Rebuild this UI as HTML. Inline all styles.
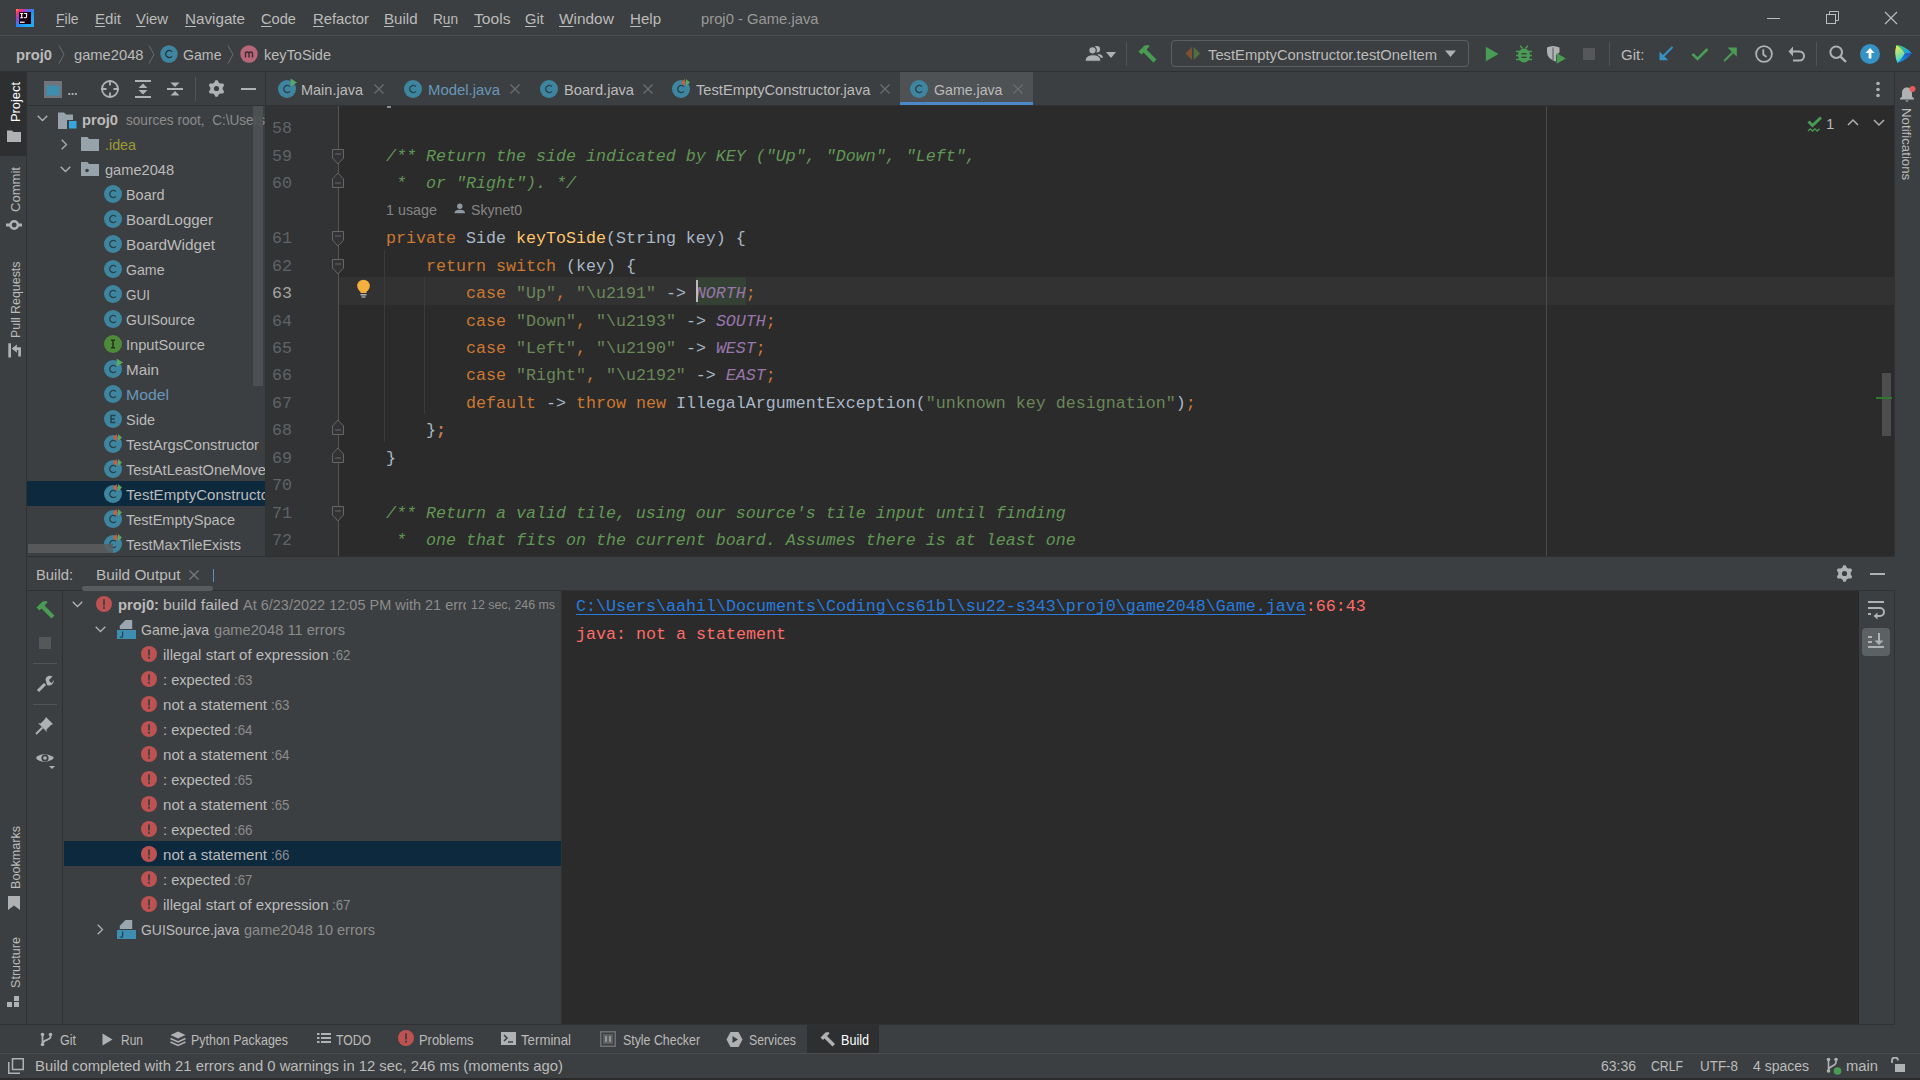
<!DOCTYPE html><html><head><meta charset="utf-8"><style>*{margin:0;padding:0;box-sizing:border-box}
html,body{width:1920px;height:1080px;overflow:hidden;background:#3C3F41;font-family:"Liberation Sans",sans-serif}
body>div,body>svg{position:absolute}
.t{white-space:pre;line-height:1}
.u{text-decoration:underline;text-underline-offset:2px;text-decoration-thickness:1px}
</style></head><body><div style="left:0px;top:0px;width:1920px;height:35px;background:#3C3F41;"></div>
<div style="left:0px;top:35px;width:1920px;height:1px;background:#4B4D4F;"></div>
<svg style="left:16px;top:9px;" width="18" height="18" viewBox="0 0 18 18"><defs><linearGradient id="lg" x1="0" y1="0" x2="0.75" y2="0.75"><stop offset="0" stop-color="#FF9A3C"/><stop offset="0.18" stop-color="#FE2E6D"/><stop offset="0.42" stop-color="#8D4BD6"/><stop offset="0.7" stop-color="#1E8EF5"/><stop offset="1" stop-color="#23A8F2"/></linearGradient></defs><rect width="18" height="18" fill="url(#lg)"/><rect x="3" y="3" width="12" height="12" fill="#1A0010"/><path d="M4.2 4.5H7.2M5.7 4.5V8.7M4.2 8.7H7.2M8.2 4.5H10.6V7.6C10.6 9 8.6 9 8.2 8.2" fill="none" stroke="#fff" stroke-width="1.1"/><rect x="4" y="12.6" width="4.6" height="1.2" fill="#fff"/></svg>
<div class="t" style="left:56px;top:11.30px;font-size:15px;color:#BBBBBB;font-family:'Liberation Sans', sans-serif;;transform:scaleX(0.9309);transform-origin:0 0"><span class="u">F</span>ile</div>
<div class="t" style="left:95px;top:11.30px;font-size:15px;color:#BBBBBB;font-family:'Liberation Sans', sans-serif;;transform:scaleX(1.0059);transform-origin:0 0"><span class="u">E</span>dit</div>
<div class="t" style="left:136px;top:11.30px;font-size:15px;color:#BBBBBB;font-family:'Liberation Sans', sans-serif;;transform:scaleX(0.9925);transform-origin:0 0"><span class="u">V</span>iew</div>
<div class="t" style="left:185px;top:11.30px;font-size:15px;color:#BBBBBB;font-family:'Liberation Sans', sans-serif;;transform:scaleX(1.0135);transform-origin:0 0"><span class="u">N</span>avigate</div>
<div class="t" style="left:261px;top:11.30px;font-size:15px;color:#BBBBBB;font-family:'Liberation Sans', sans-serif;;transform:scaleX(0.9760);transform-origin:0 0"><span class="u">C</span>ode</div>
<div class="t" style="left:312.5px;top:11.30px;font-size:15px;color:#BBBBBB;font-family:'Liberation Sans', sans-serif;;transform:scaleX(0.9878);transform-origin:0 0"><span class="u">R</span>efactor</div>
<div class="t" style="left:384px;top:11.30px;font-size:15px;color:#BBBBBB;font-family:'Liberation Sans', sans-serif;;transform:scaleX(1.0044);transform-origin:0 0"><span class="u">B</span>uild</div>
<div class="t" style="left:433px;top:11.30px;font-size:15px;color:#BBBBBB;font-family:'Liberation Sans', sans-serif;;transform:scaleX(0.9085);transform-origin:0 0">R<span class="u">u</span>n</div>
<div class="t" style="left:473.5px;top:11.30px;font-size:15px;color:#BBBBBB;font-family:'Liberation Sans', sans-serif;;transform:scaleX(1.0423);transform-origin:0 0"><span class="u">T</span>ools</div>
<div class="t" style="left:525px;top:11.30px;font-size:15px;color:#BBBBBB;font-family:'Liberation Sans', sans-serif;;transform:scaleX(0.9782);transform-origin:0 0"><span class="u">G</span>it</div>
<div class="t" style="left:559px;top:11.30px;font-size:15px;color:#BBBBBB;font-family:'Liberation Sans', sans-serif;;transform:scaleX(1.0262);transform-origin:0 0"><span class="u">W</span>indow</div>
<div class="t" style="left:630px;top:11.30px;font-size:15px;color:#BBBBBB;font-family:'Liberation Sans', sans-serif;;transform:scaleX(1.0049);transform-origin:0 0"><span class="u">H</span>elp</div>
<div class="t" style="left:701px;top:11.30px;font-size:15px;color:#999999;font-family:'Liberation Sans', sans-serif;;transform:scaleX(0.9856);transform-origin:0 0">proj0 - Game.java</div>
<div style="left:1767px;top:18px;width:13px;height:1px;background:#BBBBBB;"></div>
<svg style="left:1826px;top:11px;" width="14" height="14" viewBox="0 0 14 14"><rect x="0.5" y="3.5" width="9" height="9" fill="none" stroke="#BBB"/><path d="M3.5 3.5V0.5H12.5V9.5H9.5" fill="none" stroke="#BBB"/></svg>
<svg style="left:1884px;top:11px;" width="14" height="14" viewBox="0 0 14 14"><path d="M1 1L13 13M13 1L1 13" stroke="#BBB" stroke-width="1.2"/></svg>
<div style="left:0px;top:36px;width:1920px;height:35px;background:#3C3F41;"></div>
<div style="left:0px;top:71px;width:1920px;height:1px;background:#2E3032;"></div>
<div class="t" style="left:16px;top:47.30px;font-size:15px;color:#BBBBBB;font-family:'Liberation Sans', sans-serif;;font-weight:bold;transform:scaleX(0.9817);transform-origin:0 0">proj0</div>
<svg style="left:58px;top:45px;" width="7" height="19" viewBox="0 0 7 19"><path d="M1 0.5L6 9.5L1 18.5" fill="none" stroke="#6A6C6E" stroke-width="1"/></svg>
<div class="t" style="left:73.5px;top:47.30px;font-size:15px;color:#BBBBBB;font-family:'Liberation Sans', sans-serif;;transform:scaleX(0.9804);transform-origin:0 0">game2048</div>
<svg style="left:148px;top:45px;" width="7" height="19" viewBox="0 0 7 19"><path d="M1 0.5L6 9.5L1 18.5" fill="none" stroke="#6A6C6E" stroke-width="1"/></svg>
<svg style="left:159.5px;top:44.5px" width="18" height="18" viewBox="0 0 18 18"><circle cx="9" cy="9" r="8.7" fill="#3E86A0"/><path d="M12 6.6A3.6 3.6 0 1 0 12 11.4" fill="none" stroke="#24343B" stroke-width="1.3"/></svg>
<div class="t" style="left:183px;top:47.30px;font-size:15px;color:#BBBBBB;font-family:'Liberation Sans', sans-serif;;transform:scaleX(0.9425);transform-origin:0 0">Game</div>
<svg style="left:227px;top:45px;" width="7" height="19" viewBox="0 0 7 19"><path d="M1 0.5L6 9.5L1 18.5" fill="none" stroke="#6A6C6E" stroke-width="1"/></svg>
<svg style="left:240px;top:44.5px" width="18" height="18" viewBox="0 0 18 18"><circle cx="9" cy="9" r="8.7" fill="#B8677A"/><path d="M5.5 12.5V7M5.5 8.5C5.5 6.5 9 6.5 9 8.5V12.5M9 8.5C9 6.5 12.5 6.5 12.5 8.5V12.5" fill="none" stroke="#3B2A2E" stroke-width="1.4"/></svg>
<div class="t" style="left:263.5px;top:47.30px;font-size:15px;color:#BBBBBB;font-family:'Liberation Sans', sans-serif;;transform:scaleX(0.9681);transform-origin:0 0">keyToSide</div>
<svg style="left:1085px;top:45px;" width="20" height="17" viewBox="0 0 20 17"><circle cx="11.8" cy="4.2" r="3.3" fill="#AFB1B3"/><path d="M12.5 9C16 9 18 10.5 18 12.8H13.5Z" fill="#AFB1B3"/><circle cx="7.5" cy="5.3" r="3.8" fill="#AFB1B3" stroke="#3C3F41" stroke-width="1.3"/><path d="M0 16.2C0 12 3 9.8 8 9.8S16 12 16 16.2Z" fill="#AFB1B3" stroke="#3C3F41" stroke-width="1.1"/></svg>
<svg style="left:1106px;top:52px;" width="10" height="6" viewBox="0 0 10 6"><path d="M0 0H10L5 6Z" fill="#AFB1B3"/></svg>
<div style="left:1126px;top:42px;width:1px;height:24px;background:#515355;"></div>
<svg style="left:1137px;top:44px;" width="21" height="20" viewBox="0 0 21 20"><path d="M1.5 7.5L7.5 1.5L11.5 1L12.5 2.5L9.5 5.5L19.5 15.5L16.5 18.5L6.5 8.5L4.5 10.5Z" fill="#499C54"/></svg>
<div style="left:1171px;top:40px;width:298px;height:27px;background:transparent;border:1px solid #5E6060;border-radius:4px"></div>
<svg style="left:1185px;top:47px;" width="16" height="14" viewBox="0 0 16 14"><path d="M7 0V13L0.5 6.5Z" fill="#7F4F36"/><path d="M8.7 0V13L15.2 6.5Z" fill="#4D6F41"/></svg>
<div class="t" style="left:1208px;top:46.80px;font-size:15px;color:#BBBBBB;font-family:'Liberation Sans', sans-serif;;transform:scaleX(0.9846);transform-origin:0 0">TestEmptyConstructor.testOneItem</div>
<svg style="left:1445px;top:50px;" width="12" height="8" viewBox="0 0 12 8"><path d="M0 0.5H11L5.5 7Z" fill="#AFB1B3"/></svg>
<svg style="left:1485px;top:46px;" width="14" height="16" viewBox="0 0 14 16"><path d="M0.8 0.8V15.2L13.5 8Z" fill="#499C54"/></svg>
<svg style="left:1515px;top:45px;" width="18" height="18" viewBox="0 0 18 18"><path d="M5.2 0.8L7.5 3.5M12.8 0.8L10.5 3.5" stroke="#499C54" stroke-width="1.6"/><ellipse cx="9" cy="10.5" rx="6" ry="7" fill="#499C54"/><path d="M1 6.5H17M1 10.5H17M1 14.5H17" stroke="#499C54" stroke-width="1.6"/><rect x="6.5" y="8" width="5" height="1.4" fill="#3C3F41"/><rect x="6.5" y="11.6" width="5" height="1.4" fill="#3C3F41"/></svg>
<svg style="left:1546px;top:45px;" width="21" height="19" viewBox="0 0 21 19"><path d="M7 1C9.5 1 11 1.8 13.5 2.4V7.5L10 10V16.5C5.5 15 1 12.5 1 6.5V2.4C3 1.8 4.5 1 7 1Z" fill="#AFB1B3"/><path d="M7 2.5V15" stroke="#3C3F41" stroke-width="0.8"/><path d="M10.7 8V18.8L19.8 13.4Z" fill="#499C54"/></svg>
<div style="left:1583px;top:48px;width:12px;height:12px;background:#555759;"></div>
<div style="left:1609px;top:42px;width:1px;height:24px;background:#515355;"></div>
<div class="t" style="left:1621px;top:47.30px;font-size:15px;color:#BBBBBB;font-family:'Liberation Sans', sans-serif;">Git:</div>
<svg style="left:1659px;top:46px;" width="15" height="15" viewBox="0 0 15 15"><path d="M13.5 1L4 10.5" stroke="#3592C4" stroke-width="2"/><path d="M0.5 5.5V14.3H9.3Z" fill="#3592C4"/></svg>
<svg style="left:1691px;top:46px;" width="18" height="15" viewBox="0 0 18 15"><path d="M1.5 8L6.5 13L16.5 3" fill="none" stroke="#499C54" stroke-width="2.6"/></svg>
<svg style="left:1723px;top:47px;" width="15" height="15" viewBox="0 0 15 15"><path d="M1.2 14L10.5 4.7" stroke="#499C54" stroke-width="2"/><path d="M4.5 0.5H13.8V9.8Z" fill="#499C54"/></svg>
<svg style="left:1755px;top:45px;" width="18" height="18" viewBox="0 0 18 18"><circle cx="9" cy="9" r="7.9" fill="none" stroke="#AFB1B3" stroke-width="1.8"/><path d="M8.3 4.3V9.5L11.6 12" fill="none" stroke="#AFB1B3" stroke-width="1.8"/></svg>
<svg style="left:1788px;top:45px;" width="18" height="17" viewBox="0 0 18 17"><path d="M4 6.5H11.5A4.5 4.5 0 0 1 11.5 15.5H5" fill="none" stroke="#AFB1B3" stroke-width="2"/><path d="M0.5 6.5L5 1.5V11.5Z" fill="#AFB1B3"/></svg>
<div style="left:1816px;top:42px;width:1px;height:24px;background:#515355;"></div>
<svg style="left:1829px;top:45px;" width="19" height="19" viewBox="0 0 19 19"><circle cx="7.2" cy="7.2" r="5.8" fill="none" stroke="#AFB1B3" stroke-width="2"/><path d="M11.3 11.3L17 17" stroke="#AFB1B3" stroke-width="2.4"/></svg>
<svg style="left:1859px;top:43px;" width="22" height="22" viewBox="0 0 22 22"><circle cx="11" cy="11" r="10" fill="#3592C4"/><path d="M11 5L6.5 10H9.6V15.5H12.4V10H15.5Z" fill="#fff"/></svg>
<svg style="left:1893px;top:45px;" width="20" height="19" viewBox="0 0 20 19"><defs><linearGradient id="tb1" x1="0" y1="0" x2="0.3" y2="1"><stop offset="0" stop-color="#F5F244"/><stop offset="0.55" stop-color="#97DE8E"/><stop offset="1" stop-color="#26D4E6"/></linearGradient><linearGradient id="tb2" x1="0" y1="0" x2="1" y2="0.6"><stop offset="0" stop-color="#3BDB6E"/><stop offset="1" stop-color="#1C9BEB"/></linearGradient><linearGradient id="tb3" x1="1" y1="0" x2="0" y2="1"><stop offset="0" stop-color="#2150C0"/><stop offset="1" stop-color="#12A0EE"/></linearGradient></defs><path d="M3.5 0Q10 4 12 8.5Q9 14 4.5 18Q0.5 9 3.5 0Z" fill="url(#tb1)"/><path d="M3.5 0Q12 0.5 19 8.5H12Q10 4 3.5 0Z" fill="url(#tb2)"/><path d="M12 8.5H19Q13 15.5 4.5 18Q9 14 12 8.5Z" fill="url(#tb3)"/></svg>
<div style="left:0px;top:72px;width:26px;height:952px;background:#3C3F41;"></div>
<div style="left:26px;top:72px;width:1px;height:952px;background:#2F3133;"></div>
<div style="left:0px;top:72px;width:26px;height:84px;background:#2D2F31;"></div>
<div style="left:7px;top:122px;width:60px;height:18px;transform:rotate(-90deg) scaleX(0.9886);transform-origin:0 0;font-family:'Liberation Sans', sans-serif;font-size:13px;color:#FFFFFF;line-height:18px;white-space:pre">Project</div>
<svg style="left:7px;top:129px;" width="14" height="13" viewBox="0 0 14 13"><path d="M0 1.5H5L6.5 3H14V13H0Z" fill="#AFB1B3"/></svg>
<div style="left:7px;top:212px;width:65px;height:18px;transform:rotate(-90deg) scaleX(1.0049);transform-origin:0 0;font-family:'Liberation Sans', sans-serif;font-size:13px;color:#BBBBBB;line-height:18px;white-space:pre">Commit</div>
<svg style="left:5px;top:217px;" width="18" height="16" viewBox="0 0 18 16"><circle cx="9.2" cy="8" r="3.7" fill="none" stroke="#AFB1B3" stroke-width="2.5"/><path d="M1 8H5.5M12.9 8H17" stroke="#AFB1B3" stroke-width="2.8"/></svg>
<div style="left:7px;top:338px;width:96.5px;height:18px;transform:rotate(-90deg) scaleX(0.9539);transform-origin:0 0;font-family:'Liberation Sans', sans-serif;font-size:13px;color:#BBBBBB;line-height:18px;white-space:pre">Pull Requests</div>
<svg style="left:7px;top:342px;" width="16" height="17" viewBox="0 0 16 17"><rect x="1.3" y="1.3" width="2.7" height="14.2" fill="#AFB1B3"/><path d="M4.7 6.6L9.9 2.4V10.8Z" fill="#AFB1B3"/><path d="M9 6.6H12.6V14.4" fill="none" stroke="#AFB1B3" stroke-width="2.7"/></svg>
<div style="left:7px;top:889px;width:83px;height:18px;transform:rotate(-90deg) scaleX(0.9689);transform-origin:0 0;font-family:'Liberation Sans', sans-serif;font-size:13px;color:#BBBBBB;line-height:18px;white-space:pre">Bookmarks</div>
<svg style="left:8px;top:896px;" width="12" height="14" viewBox="0 0 12 14"><path d="M0 0H12V14L6 9.5L0 14Z" fill="#AFB1B3"/></svg>
<div style="left:7px;top:988px;width:71px;height:18px;transform:rotate(-90deg) scaleX(0.9670);transform-origin:0 0;font-family:'Liberation Sans', sans-serif;font-size:13px;color:#BBBBBB;line-height:18px;white-space:pre">Structure</div>
<svg style="left:7px;top:996px;" width="14" height="12" viewBox="0 0 14 12"><rect x="7" y="0" width="5" height="5" fill="#AFB1B3"/><rect x="0" y="6" width="5" height="5" fill="#AFB1B3"/><rect x="7" y="6" width="5" height="5" fill="#AFB1B3"/></svg>
<div style="left:27px;top:72px;width:238px;height:33px;background:#3C3F41;"></div>
<div style="left:27px;top:105px;width:238px;height:1px;background:#2F3133;"></div>
<svg style="left:44px;top:81px;" width="18" height="17" viewBox="0 0 18 17"><rect x="0" y="0" width="18" height="17" fill="#6F757A" /><rect x="2.5" y="4.5" width="13" height="10" fill="#3E8EB0"/></svg>
<svg style="left:68px;top:92px;" width="10" height="4" viewBox="0 0 10 4"><circle cx="1.3" cy="2" r="1.1" fill="#BBB"/><circle cx="4.6" cy="2" r="1.1" fill="#BBB"/><circle cx="7.9" cy="2" r="1.1" fill="#BBB"/></svg>
<svg style="left:100px;top:79px;" width="20" height="20" viewBox="0 0 20 20"><circle cx="10" cy="10" r="8" fill="none" stroke="#AFB1B3" stroke-width="1.8"/><path d="M10 1V6.5M10 13.5V19M1 10H6.5M13.5 10H19" stroke="#AFB1B3" stroke-width="1.8"/></svg>
<svg style="left:134px;top:80px;" width="18" height="18" viewBox="0 0 18 18"><path d="M1 1H17M1 17H17" stroke="#AFB1B3" stroke-width="2"/><path d="M9 3.5L13.5 8H4.5Z M9 14.5L13.5 10H4.5Z" fill="#AFB1B3"/></svg>
<svg style="left:166px;top:80px;" width="18" height="18" viewBox="0 0 18 18"><path d="M1 9H17" stroke="#AFB1B3" stroke-width="2"/><path d="M9 7L13.5 2.5H4.5Z M9 11L13.5 15.5H4.5Z" fill="#AFB1B3"/></svg>
<div style="left:195px;top:77px;width:1px;height:24px;background:#515355;"></div>
<svg style="left:208px;top:80px;" width="17" height="17" viewBox="0 0 17 17"><polygon points="7.42,0.27 9.58,0.27 10.87,2.77 12.27,3.58 15.08,3.45 16.17,5.32 14.65,7.69 14.65,9.31 16.17,11.68 15.08,13.55 12.27,13.42 10.87,14.23 9.58,16.73 7.42,16.73 6.13,14.23 4.73,13.42 1.92,13.55 0.83,11.68 2.35,9.31 2.35,7.69 0.83,5.32 1.92,3.45 4.73,3.58 6.13,2.77" fill="#AFB1B3"/><circle cx="8.5" cy="8.5" r="2.6" fill="#3C3F41"/></svg>
<div style="left:241px;top:88px;width:15px;height:2.4px;background:#AFB1B3;"></div>
<div style="left:27px;top:106px;width:238px;height:450px;background:#3C3F41;"></div>
<div style="left:27px;top:481px;width:238px;height:25px;background:#0D293E;"></div>
<svg style="left:37px;top:115px;" width="11" height="7" viewBox="0 0 11 7"><path d="M0.7 0.7L5.5 5.5L10.3 0.7" fill="none" stroke="#AFB1B3" stroke-width="1.3"/></svg>
<svg style="left:58px;top:111px;" width="20" height="18" viewBox="0 0 20 18"><path d="M0 1.5H6L8 3.5H15V9H9V18H0Z" fill="#97A3AB"/><rect x="11" y="10" width="7.5" height="7.5" fill="#35A7E0"/></svg>
<div class="t" style="left:81.5px;top:112.30px;font-size:15px;color:#BBBBBB;font-family:'Liberation Sans', sans-serif;;font-weight:bold;transform:scaleX(0.9817);transform-origin:0 0">proj0</div>
<div class="t" style="left:125.5px;top:112.30px;font-size:15px;color:#8C8C8C;font-family:'Liberation Sans', sans-serif;;transform:scaleX(0.9063);transform-origin:0 0">sources root,  C:\Users</div>
<svg style="left:61px;top:139px;" width="7" height="11" viewBox="0 0 7 11"><path d="M0.7 0.7L5.5 5.5L0.7 10.3" fill="none" stroke="#AFB1B3" stroke-width="1.3"/></svg>
<svg style="left:81px;top:136px;" width="18" height="15" viewBox="0 0 18 15"><path d="M0 1H6.5L8 3H18V15H0Z" fill="#97A3AB"/></svg>
<div class="t" style="left:104.5px;top:137.30px;font-size:15px;color:#9C9C36;font-family:'Liberation Sans', sans-serif;;transform:scaleX(0.9531);transform-origin:0 0">.idea</div>
<svg style="left:60px;top:166px;" width="11" height="7" viewBox="0 0 11 7"><path d="M0.7 0.7L5.5 5.5L10.3 0.7" fill="none" stroke="#AFB1B3" stroke-width="1.3"/></svg>
<svg style="left:81px;top:161px;" width="18" height="15" viewBox="0 0 18 15"><path d="M0 1H6.5L8 3H18V15H0Z" fill="#97A3AB"/><circle cx="6" cy="9.5" r="1.8" fill="#3C3F41"/></svg>
<div class="t" style="left:104.5px;top:162.30px;font-size:15px;color:#BBBBBB;font-family:'Liberation Sans', sans-serif;;transform:scaleX(0.9733);transform-origin:0 0">game2048</div>
<svg style="left:104px;top:185px;overflow:visible" width="18" height="18" viewBox="0 0 18 18"><circle cx="9" cy="9" r="9" fill="#3E86A0"/><path d="M12 6.6A3.6 3.6 0 1 0 12 11.4" fill="none" stroke="#28404A" stroke-width="1.3"/></svg>
<div class="t" style="left:125.8px;top:187.30px;font-size:15px;color:#BBBBBB;font-family:'Liberation Sans', sans-serif;;transform:scaleX(0.9619);transform-origin:0 0">Board</div>
<svg style="left:104px;top:210px;overflow:visible" width="18" height="18" viewBox="0 0 18 18"><circle cx="9" cy="9" r="9" fill="#3E86A0"/><path d="M12 6.6A3.6 3.6 0 1 0 12 11.4" fill="none" stroke="#28404A" stroke-width="1.3"/></svg>
<div class="t" style="left:125.8px;top:212.30px;font-size:15px;color:#BBBBBB;font-family:'Liberation Sans', sans-serif;;transform:scaleX(1.0031);transform-origin:0 0">BoardLogger</div>
<svg style="left:104px;top:235px;overflow:visible" width="18" height="18" viewBox="0 0 18 18"><circle cx="9" cy="9" r="9" fill="#3E86A0"/><path d="M12 6.6A3.6 3.6 0 1 0 12 11.4" fill="none" stroke="#28404A" stroke-width="1.3"/></svg>
<div class="t" style="left:125.8px;top:237.30px;font-size:15px;color:#BBBBBB;font-family:'Liberation Sans', sans-serif;;transform:scaleX(1.0264);transform-origin:0 0">BoardWidget</div>
<svg style="left:104px;top:260px;overflow:visible" width="18" height="18" viewBox="0 0 18 18"><circle cx="9" cy="9" r="9" fill="#3E86A0"/><path d="M12 6.6A3.6 3.6 0 1 0 12 11.4" fill="none" stroke="#28404A" stroke-width="1.3"/></svg>
<div class="t" style="left:125.8px;top:262.30px;font-size:15px;color:#BBBBBB;font-family:'Liberation Sans', sans-serif;;transform:scaleX(0.9425);transform-origin:0 0">Game</div>
<svg style="left:104px;top:285px;overflow:visible" width="18" height="18" viewBox="0 0 18 18"><circle cx="9" cy="9" r="9" fill="#3E86A0"/><path d="M12 6.6A3.6 3.6 0 1 0 12 11.4" fill="none" stroke="#28404A" stroke-width="1.3"/></svg>
<div class="t" style="left:125.8px;top:287.30px;font-size:15px;color:#BBBBBB;font-family:'Liberation Sans', sans-serif;;transform:scaleX(0.9000);transform-origin:0 0">GUI</div>
<svg style="left:104px;top:310px;overflow:visible" width="18" height="18" viewBox="0 0 18 18"><circle cx="9" cy="9" r="9" fill="#3E86A0"/><path d="M12 6.6A3.6 3.6 0 1 0 12 11.4" fill="none" stroke="#28404A" stroke-width="1.3"/></svg>
<div class="t" style="left:125.8px;top:312.30px;font-size:15px;color:#BBBBBB;font-family:'Liberation Sans', sans-serif;;transform:scaleX(0.9300);transform-origin:0 0">GUISource</div>
<svg style="left:104px;top:335px;overflow:visible" width="18" height="18" viewBox="0 0 18 18"><circle cx="9" cy="9" r="9" fill="#4F8A3A"/><path d="M7 5.3H11M7 12.7H11M9 5.3V12.7" fill="none" stroke="#22331B" stroke-width="1.5"/></svg>
<div class="t" style="left:125.8px;top:337.30px;font-size:15px;color:#BBBBBB;font-family:'Liberation Sans', sans-serif;;transform:scaleX(0.9767);transform-origin:0 0">InputSource</div>
<svg style="left:104px;top:360px;overflow:visible" width="18" height="18" viewBox="0 0 18 18"><circle cx="9" cy="9" r="9" fill="#3E86A0"/><path d="M12 6.6A3.6 3.6 0 1 0 12 11.4" fill="none" stroke="#28404A" stroke-width="1.3"/><path d="M12.6 -1.5V6.5L19 2.5Z" fill="#59A869"/></svg>
<div class="t" style="left:125.8px;top:362.30px;font-size:15px;color:#BBBBBB;font-family:'Liberation Sans', sans-serif;;transform:scaleX(1.0150);transform-origin:0 0">Main</div>
<svg style="left:104px;top:385px;overflow:visible" width="18" height="18" viewBox="0 0 18 18"><circle cx="9" cy="9" r="9" fill="#3E86A0"/><path d="M12 6.6A3.6 3.6 0 1 0 12 11.4" fill="none" stroke="#28404A" stroke-width="1.3"/></svg>
<div class="t" style="left:125.8px;top:387.30px;font-size:15px;color:#6897BB;font-family:'Liberation Sans', sans-serif;;transform:scaleX(1.0525);transform-origin:0 0">Model</div>
<svg style="left:104px;top:410px;overflow:visible" width="18" height="18" viewBox="0 0 18 18"><circle cx="9" cy="9" r="9" fill="#3E86A0"/><path d="M11.5 5.5H7V12.5H11.5M7 9H10.8" fill="none" stroke="#28404A" stroke-width="1.5"/></svg>
<div class="t" style="left:125.8px;top:412.30px;font-size:15px;color:#BBBBBB;font-family:'Liberation Sans', sans-serif;;transform:scaleX(0.9660);transform-origin:0 0">Side</div>
<svg style="left:104px;top:435px;overflow:visible" width="18" height="18" viewBox="0 0 18 18"><circle cx="9" cy="9" r="9" fill="#3E86A0"/><path d="M12 6.6A3.6 3.6 0 1 0 12 11.4" fill="none" stroke="#28404A" stroke-width="1.3"/><path d="M12.8 -1V6L9 2.5Z" fill="#E0592E"/><path d="M14 -1V6L18 2.5Z" fill="#59A869"/></svg>
<div class="t" style="left:125.8px;top:437.30px;font-size:15px;color:#BBBBBB;font-family:'Liberation Sans', sans-serif;;transform:scaleX(0.9788);transform-origin:0 0">TestArgsConstructor</div>
<svg style="left:104px;top:460px;overflow:visible" width="18" height="18" viewBox="0 0 18 18"><circle cx="9" cy="9" r="9" fill="#3E86A0"/><path d="M12 6.6A3.6 3.6 0 1 0 12 11.4" fill="none" stroke="#28404A" stroke-width="1.3"/><path d="M12.8 -1V6L9 2.5Z" fill="#E0592E"/><path d="M14 -1V6L18 2.5Z" fill="#59A869"/></svg>
<div class="t" style="left:125.8px;top:462.30px;font-size:15px;color:#BBBBBB;font-family:'Liberation Sans', sans-serif;;transform:scaleX(0.9762);transform-origin:0 0">TestAtLeastOneMove</div>
<svg style="left:104px;top:485px;overflow:visible" width="18" height="18" viewBox="0 0 18 18"><circle cx="9" cy="9" r="9" fill="#3E86A0"/><path d="M12 6.6A3.6 3.6 0 1 0 12 11.4" fill="none" stroke="#28404A" stroke-width="1.3"/><path d="M12.8 -1V6L9 2.5Z" fill="#E0592E"/><path d="M14 -1V6L18 2.5Z" fill="#59A869"/></svg>
<div class="t" style="left:125.8px;top:487.30px;font-size:15px;color:#BBBBBB;font-family:'Liberation Sans', sans-serif;;transform:scaleX(1.0031);transform-origin:0 0">TestEmptyConstructor</div>
<svg style="left:104px;top:510px;overflow:visible" width="18" height="18" viewBox="0 0 18 18"><circle cx="9" cy="9" r="9" fill="#3E86A0"/><path d="M12 6.6A3.6 3.6 0 1 0 12 11.4" fill="none" stroke="#28404A" stroke-width="1.3"/><path d="M12.8 -1V6L9 2.5Z" fill="#E0592E"/><path d="M14 -1V6L18 2.5Z" fill="#59A869"/></svg>
<div class="t" style="left:125.8px;top:512.30px;font-size:15px;color:#BBBBBB;font-family:'Liberation Sans', sans-serif;;transform:scaleX(0.9684);transform-origin:0 0">TestEmptySpace</div>
<svg style="left:104px;top:535px;overflow:visible" width="18" height="18" viewBox="0 0 18 18"><circle cx="9" cy="9" r="9" fill="#3E86A0"/><path d="M12 6.6A3.6 3.6 0 1 0 12 11.4" fill="none" stroke="#28404A" stroke-width="1.3"/><path d="M12.8 -1V6L9 2.5Z" fill="#E0592E"/><path d="M14 -1V6L18 2.5Z" fill="#59A869"/></svg>
<div class="t" style="left:125.8px;top:537.30px;font-size:15px;color:#BBBBBB;font-family:'Liberation Sans', sans-serif;;transform:scaleX(0.9626);transform-origin:0 0">TestMaxTileExists</div>
<div style="left:253px;top:106px;width:10px;height:280px;background:#4E5254;opacity:0.9"></div>
<div style="left:28px;top:544px;width:85px;height:9px;background:#5A5D5F;opacity:0.85"></div>
<div style="left:265px;top:72px;width:1629px;height:33px;background:#3C3F41;"></div>
<div style="left:265px;top:72px;width:1px;height:484px;background:#2F3133;"></div>
<div style="left:265px;top:105px;width:1629px;height:1px;background:#2F3133;"></div>
<div style="left:900px;top:72px;width:133px;height:31px;background:#4E5254;"></div>
<div style="left:900px;top:102px;width:133px;height:3px;background:#4A88C7;"></div>
<svg style="left:277.5px;top:80px;overflow:visible" width="18" height="18" viewBox="0 0 18 18"><circle cx="9" cy="9" r="9" fill="#3E86A0"/><path d="M12 6.6A3.6 3.6 0 1 0 12 11.4" fill="none" stroke="#28404A" stroke-width="1.3"/><path d="M12.6 -1.5V6.5L19 2.5Z" fill="#59A869"/></svg>
<div class="t" style="left:301px;top:82.30px;font-size:15px;color:#BBBBBB;font-family:'Liberation Sans', sans-serif;;transform:scaleX(0.9658);transform-origin:0 0">Main.java</div>
<svg style="left:374px;top:84px;" width="10" height="10" viewBox="0 0 10 10"><path d="M0.5 0.5L9.5 9.5M9.5 0.5L0.5 9.5" stroke="#6E6E6E" stroke-width="1.2"/></svg>
<svg style="left:404px;top:80px;overflow:visible" width="18" height="18" viewBox="0 0 18 18"><circle cx="9" cy="9" r="9" fill="#3E86A0"/><path d="M12 6.6A3.6 3.6 0 1 0 12 11.4" fill="none" stroke="#28404A" stroke-width="1.3"/></svg>
<div class="t" style="left:428px;top:82.30px;font-size:15px;color:#6897BB;font-family:'Liberation Sans', sans-serif;;transform:scaleX(0.9926);transform-origin:0 0">Model.java</div>
<svg style="left:510px;top:84px;" width="10" height="10" viewBox="0 0 10 10"><path d="M0.5 0.5L9.5 9.5M9.5 0.5L0.5 9.5" stroke="#6E6E6E" stroke-width="1.2"/></svg>
<svg style="left:540px;top:80px;overflow:visible" width="18" height="18" viewBox="0 0 18 18"><circle cx="9" cy="9" r="9" fill="#3E86A0"/><path d="M12 6.6A3.6 3.6 0 1 0 12 11.4" fill="none" stroke="#28404A" stroke-width="1.3"/></svg>
<div class="t" style="left:564px;top:82.30px;font-size:15px;color:#BBBBBB;font-family:'Liberation Sans', sans-serif;;transform:scaleX(0.9761);transform-origin:0 0">Board.java</div>
<svg style="left:643px;top:84px;" width="10" height="10" viewBox="0 0 10 10"><path d="M0.5 0.5L9.5 9.5M9.5 0.5L0.5 9.5" stroke="#6E6E6E" stroke-width="1.2"/></svg>
<svg style="left:672px;top:80px;overflow:visible" width="18" height="18" viewBox="0 0 18 18"><circle cx="9" cy="9" r="9" fill="#3E86A0"/><path d="M12 6.6A3.6 3.6 0 1 0 12 11.4" fill="none" stroke="#28404A" stroke-width="1.3"/><path d="M12.8 -1V6L9 2.5Z" fill="#E0592E"/><path d="M14 -1V6L18 2.5Z" fill="#59A869"/></svg>
<div class="t" style="left:696px;top:82.30px;font-size:15px;color:#BBBBBB;font-family:'Liberation Sans', sans-serif;;transform:scaleX(0.9781);transform-origin:0 0">TestEmptyConstructor.java</div>
<svg style="left:880px;top:84px;" width="10" height="10" viewBox="0 0 10 10"><path d="M0.5 0.5L9.5 9.5M9.5 0.5L0.5 9.5" stroke="#6E6E6E" stroke-width="1.2"/></svg>
<svg style="left:910px;top:80px;overflow:visible" width="18" height="18" viewBox="0 0 18 18"><circle cx="9" cy="9" r="9" fill="#3E86A0"/><path d="M12 6.6A3.6 3.6 0 1 0 12 11.4" fill="none" stroke="#28404A" stroke-width="1.3"/></svg>
<div class="t" style="left:934px;top:82.30px;font-size:15px;color:#BBBBBB;font-family:'Liberation Sans', sans-serif;;transform:scaleX(0.9444);transform-origin:0 0">Game.java</div>
<svg style="left:1013px;top:84px;" width="10" height="10" viewBox="0 0 10 10"><path d="M0.5 0.5L9.5 9.5M9.5 0.5L0.5 9.5" stroke="#6E6E6E" stroke-width="1.2"/></svg>
<svg style="left:1875px;top:81px;" width="6" height="17" viewBox="0 0 6 17"><circle cx="3" cy="2.5" r="1.8" fill="#AFB1B3"/><circle cx="3" cy="8.5" r="1.8" fill="#AFB1B3"/><circle cx="3" cy="14.5" r="1.8" fill="#AFB1B3"/></svg>
<div style="left:1894px;top:72px;width:1px;height:952px;background:#2F3133;"></div>
<div style="left:1895px;top:72px;width:25px;height:952px;background:#3C3F41;"></div>
<svg style="left:1899px;top:86px;" width="17" height="16" viewBox="0 0 17 16"><path d="M8 1.5C4.5 1.5 3 4 3 7V10.5L1 12.5V13.5H15V12.5L13 10.5V7C13 4 11.5 1.5 8 1.5Z" fill="#AFB1B3"/><path d="M6 14.5H10L8 16Z" fill="#AFB1B3"/><circle cx="13.5" cy="3" r="3" fill="#E55B5B"/></svg>
<div style="left:1914.7px;top:108px;width:90px;height:18px;transform:rotate(90deg) scaleX(1.02);transform-origin:0 0;font-family:'Liberation Sans', sans-serif;font-size:13px;color:#BBBBBB;line-height:18px;white-space:pre">Notifications</div>
<div style="left:266px;top:106px;width:1628px;height:450px;background:#2B2B2B;"></div>
<div style="left:266px;top:106px;width:73px;height:450px;background:#313335;"></div>
<div style="left:339px;top:277px;width:1555px;height:28px;background:#323232;"></div>
<div class="t" style="left:346px;top:148.69px;font-family:'Liberation Mono', monospace;font-size:16.67px;color:#A9B7C6"><span style="color:#629755;font-style:italic">    /** Return the side indicated by KEY ("Up", "Down", "Left",</span></div>
<div class="t" style="left:346px;top:176.16px;font-family:'Liberation Mono', monospace;font-size:16.67px;color:#A9B7C6"><span style="color:#629755;font-style:italic">     *  or "Right"). */</span></div>
<div class="t" style="left:346px;top:231.10px;font-family:'Liberation Mono', monospace;font-size:16.67px;color:#A9B7C6"><span style="color:#A9B7C6;">    </span><span style="color:#CC7832;">private </span><span style="color:#A9B7C6;">Side </span><span style="color:#FFC66D;">keyToSide</span><span style="color:#A9B7C6;">(String key) {</span></div>
<div class="t" style="left:346px;top:258.57px;font-family:'Liberation Mono', monospace;font-size:16.67px;color:#A9B7C6"><span style="color:#A9B7C6;">        </span><span style="color:#CC7832;">return switch </span><span style="color:#A9B7C6;">(key) {</span></div>
<div style="left:696px;top:277px;width:50px;height:28px;background:#344134;"></div>
<div class="t" style="left:346px;top:286.04px;font-family:'Liberation Mono', monospace;font-size:16.67px;color:#A9B7C6"><span style="color:#A9B7C6;">            </span><span style="color:#CC7832;">case </span><span style="color:#6A8759;">"Up"</span><span style="color:#CC7832;">, </span><span style="color:#6A8759;">"\u2191"</span><span style="color:#A9B7C6;"> -&gt; </span><span style="color:#9876AA;font-style:italic">NORTH</span><span style="color:#CC7832;">;</span></div>
<div class="t" style="left:346px;top:313.51px;font-family:'Liberation Mono', monospace;font-size:16.67px;color:#A9B7C6"><span style="color:#A9B7C6;">            </span><span style="color:#CC7832;">case </span><span style="color:#6A8759;">"Down"</span><span style="color:#CC7832;">, </span><span style="color:#6A8759;">"\u2193"</span><span style="color:#A9B7C6;"> -&gt; </span><span style="color:#9876AA;font-style:italic">SOUTH</span><span style="color:#CC7832;">;</span></div>
<div class="t" style="left:346px;top:340.98px;font-family:'Liberation Mono', monospace;font-size:16.67px;color:#A9B7C6"><span style="color:#A9B7C6;">            </span><span style="color:#CC7832;">case </span><span style="color:#6A8759;">"Left"</span><span style="color:#CC7832;">, </span><span style="color:#6A8759;">"\u2190"</span><span style="color:#A9B7C6;"> -&gt; </span><span style="color:#9876AA;font-style:italic">WEST</span><span style="color:#CC7832;">;</span></div>
<div class="t" style="left:346px;top:368.45px;font-family:'Liberation Mono', monospace;font-size:16.67px;color:#A9B7C6"><span style="color:#A9B7C6;">            </span><span style="color:#CC7832;">case </span><span style="color:#6A8759;">"Right"</span><span style="color:#CC7832;">, </span><span style="color:#6A8759;">"\u2192"</span><span style="color:#A9B7C6;"> -&gt; </span><span style="color:#9876AA;font-style:italic">EAST</span><span style="color:#CC7832;">;</span></div>
<div class="t" style="left:346px;top:395.92px;font-family:'Liberation Mono', monospace;font-size:16.67px;color:#A9B7C6"><span style="color:#A9B7C6;">            </span><span style="color:#CC7832;">default </span><span style="color:#A9B7C6;">-&gt; </span><span style="color:#CC7832;">throw new </span><span style="color:#A9B7C6;">IllegalArgumentException(</span><span style="color:#6A8759;">"unknown key designation"</span><span style="color:#A9B7C6;">)</span><span style="color:#CC7832;">;</span></div>
<div class="t" style="left:346px;top:423.39px;font-family:'Liberation Mono', monospace;font-size:16.67px;color:#A9B7C6"><span style="color:#A9B7C6;">        };</span></div>
<div class="t" style="left:436px;top:423.39px;font-family:'Liberation Mono', monospace;font-size:16.67px;color:#CC7832">;</div>
<div class="t" style="left:346px;top:450.86px;font-family:'Liberation Mono', monospace;font-size:16.67px;color:#A9B7C6"><span style="color:#A9B7C6;">    }</span></div>
<div class="t" style="left:346px;top:505.80px;font-family:'Liberation Mono', monospace;font-size:16.67px;color:#A9B7C6"><span style="color:#629755;font-style:italic">    /** Return a valid tile, using our source's tile input until finding</span></div>
<div class="t" style="left:346px;top:533.27px;font-family:'Liberation Mono', monospace;font-size:16.67px;color:#A9B7C6"><span style="color:#629755;font-style:italic">     *  one that fits on the current board. Assumes there is at least one</span></div>
<div style="left:1546px;top:106px;width:1px;height:450px;background:#4A4A4A;"></div>
<div style="left:387px;top:106px;width:4px;height:1.5px;background:#A9B7C6;opacity:0.7"></div>
<div style="left:696px;top:280px;width:2px;height:22px;background:#BBBBBB;"></div>
<div class="t" style="left:386px;top:203.15px;font-size:14px;color:#858585;font-family:'Liberation Sans', sans-serif;;transform:scaleX(1.0237);transform-origin:0 0">1 usage</div>
<svg style="left:454px;top:203px;" width="12" height="11" viewBox="0 0 12 11"><circle cx="5.8" cy="3.2" r="2.7" fill="#8E99A3"/><path d="M0.5 10.2C0.5 7.6 3 6.8 5.8 6.8S11 7.6 11 10.2Z" fill="#8E99A3"/></svg>
<div class="t" style="left:471px;top:203.15px;font-size:14px;color:#858585;font-family:'Liberation Sans', sans-serif;;transform:scaleX(1.0082);transform-origin:0 0">Skynet0</div>
<div class="t" style="left:272px;top:121.22px;font-family:'Liberation Mono', monospace;font-size:16.67px;color:#606366;width:20px;text-align:right">58</div>
<div class="t" style="left:272px;top:148.69px;font-family:'Liberation Mono', monospace;font-size:16.67px;color:#606366;width:20px;text-align:right">59</div>
<div class="t" style="left:272px;top:176.16px;font-family:'Liberation Mono', monospace;font-size:16.67px;color:#606366;width:20px;text-align:right">60</div>
<div class="t" style="left:272px;top:231.10px;font-family:'Liberation Mono', monospace;font-size:16.67px;color:#606366;width:20px;text-align:right">61</div>
<div class="t" style="left:272px;top:258.57px;font-family:'Liberation Mono', monospace;font-size:16.67px;color:#606366;width:20px;text-align:right">62</div>
<div class="t" style="left:272px;top:286.04px;font-family:'Liberation Mono', monospace;font-size:16.67px;color:#A4A3A3;width:20px;text-align:right">63</div>
<div class="t" style="left:272px;top:313.51px;font-family:'Liberation Mono', monospace;font-size:16.67px;color:#606366;width:20px;text-align:right">64</div>
<div class="t" style="left:272px;top:340.98px;font-family:'Liberation Mono', monospace;font-size:16.67px;color:#606366;width:20px;text-align:right">65</div>
<div class="t" style="left:272px;top:368.45px;font-family:'Liberation Mono', monospace;font-size:16.67px;color:#606366;width:20px;text-align:right">66</div>
<div class="t" style="left:272px;top:395.92px;font-family:'Liberation Mono', monospace;font-size:16.67px;color:#606366;width:20px;text-align:right">67</div>
<div class="t" style="left:272px;top:423.39px;font-family:'Liberation Mono', monospace;font-size:16.67px;color:#606366;width:20px;text-align:right">68</div>
<div class="t" style="left:272px;top:450.86px;font-family:'Liberation Mono', monospace;font-size:16.67px;color:#606366;width:20px;text-align:right">69</div>
<div class="t" style="left:272px;top:478.33px;font-family:'Liberation Mono', monospace;font-size:16.67px;color:#606366;width:20px;text-align:right">70</div>
<div class="t" style="left:272px;top:505.80px;font-family:'Liberation Mono', monospace;font-size:16.67px;color:#606366;width:20px;text-align:right">71</div>
<div class="t" style="left:272px;top:533.27px;font-family:'Liberation Mono', monospace;font-size:16.67px;color:#606366;width:20px;text-align:right">72</div>
<div style="left:338px;top:106px;width:1px;height:450px;background:#555555;"></div>
<svg style="left:332px;top:148.97px;" width="13" height="16" viewBox="0 0 13 16"><path d="M0.5 0.5H11.5V9L6 15L0.5 9Z" fill="#313335" stroke="#666" stroke-width="1"/><path d="M3 5H9" stroke="#666" stroke-width="1"/></svg>
<svg style="left:332px;top:231.38px;" width="13" height="16" viewBox="0 0 13 16"><path d="M0.5 0.5H11.5V9L6 15L0.5 9Z" fill="#313335" stroke="#666" stroke-width="1"/><path d="M3 5H9" stroke="#666" stroke-width="1"/></svg>
<svg style="left:332px;top:258.85px;" width="13" height="16" viewBox="0 0 13 16"><path d="M0.5 0.5H11.5V9L6 15L0.5 9Z" fill="#313335" stroke="#666" stroke-width="1"/><path d="M3 5H9" stroke="#666" stroke-width="1"/></svg>
<svg style="left:332px;top:506.08px;" width="13" height="16" viewBox="0 0 13 16"><path d="M0.5 0.5H11.5V9L6 15L0.5 9Z" fill="#313335" stroke="#666" stroke-width="1"/><path d="M3 5H9" stroke="#666" stroke-width="1"/></svg>
<svg style="left:332px;top:171.94px;" width="13" height="16" viewBox="0 0 13 16"><path d="M0.5 15.5H11.5V7L6 1L0.5 7Z" fill="#313335" stroke="#666" stroke-width="1"/><path d="M3 11H9" stroke="#666" stroke-width="1"/></svg>
<svg style="left:332px;top:419.16999999999996px;" width="13" height="16" viewBox="0 0 13 16"><path d="M0.5 15.5H11.5V7L6 1L0.5 7Z" fill="#313335" stroke="#666" stroke-width="1"/><path d="M3 11H9" stroke="#666" stroke-width="1"/></svg>
<svg style="left:332px;top:446.64px;" width="13" height="16" viewBox="0 0 13 16"><path d="M0.5 15.5H11.5V7L6 1L0.5 7Z" fill="#313335" stroke="#666" stroke-width="1"/><path d="M3 11H9" stroke="#666" stroke-width="1"/></svg>
<div style="left:384px;top:250px;width:1px;height:192px;background:#3B3B3B;"></div>
<div style="left:424px;top:277px;width:1px;height:137px;background:#3B3B3B;"></div>
<svg style="left:356px;top:279px;" width="15" height="19" viewBox="0 0 15 19"><circle cx="7.5" cy="7" r="6.3" fill="#F4AF3D"/><rect x="4.5" y="12" width="6" height="2" fill="#F4AF3D"/><rect x="4.5" y="15" width="6" height="1.5" fill="#AFB1B3"/><rect x="5.5" y="17.3" width="4" height="1.3" fill="#AFB1B3"/></svg>
<svg style="left:1806px;top:115px;" width="17" height="19" viewBox="0 0 17 19"><path d="M2.5 6.5L6.5 10.5L15 2.5" fill="none" stroke="#499C54" stroke-width="3"/><path d="M2 16L4.3 13.8L6.6 16L8.9 13.8L11.2 16L13.5 13.8" fill="none" stroke="#499C54" stroke-width="1.3"/></svg>
<div class="t" style="left:1826px;top:116.30px;font-size:15px;color:#BBBBBB;font-family:'Liberation Sans', sans-serif;">1</div>
<svg style="left:1847px;top:118px;" width="12" height="8" viewBox="0 0 12 8"><path d="M1 7L6 2L11 7" fill="none" stroke="#AFB1B3" stroke-width="1.5"/></svg>
<svg style="left:1873px;top:119px;" width="12" height="8" viewBox="0 0 12 8"><path d="M1 1L6 6L11 1" fill="none" stroke="#AFB1B3" stroke-width="1.5"/></svg>
<div style="left:1882px;top:373px;width:9px;height:63px;background:#4B4D4E;"></div>
<div style="left:1876px;top:397px;width:16px;height:2px;background:#2D7A2D;"></div>
<div style="left:27px;top:556px;width:1868px;height:1px;background:#313131;"></div>
<div style="left:27px;top:557px;width:1868px;height:33px;background:#3C3F41;"></div>
<div style="left:27px;top:590px;width:1868px;height:1px;background:#2F3133;"></div>
<div class="t" style="left:35.5px;top:567.30px;font-size:15px;color:#BBBBBB;font-family:'Liberation Sans', sans-serif;;transform:scaleX(0.9861);transform-origin:0 0">Build:</div>
<div class="t" style="left:96px;top:567.30px;font-size:15px;color:#BBBBBB;font-family:'Liberation Sans', sans-serif;;transform:scaleX(1.0236);transform-origin:0 0">Build Output</div>
<svg style="left:189px;top:570px;" width="10" height="10" viewBox="0 0 10 10"><path d="M0.5 0.5L9.5 9.5M9.5 0.5L0.5 9.5" stroke="#7A7C7E" stroke-width="1.2"/></svg>
<div style="left:213px;top:569px;width:1.2px;height:13px;background:#5A8FC7;"></div>
<div style="left:82px;top:586px;width:131px;height:4.5px;background:#595B5D;border-radius:3px"></div>
<svg style="left:1836px;top:565px;" width="17" height="17" viewBox="0 0 17 17"><polygon points="7.42,0.27 9.58,0.27 10.87,2.77 12.27,3.58 15.08,3.45 16.17,5.32 14.65,7.69 14.65,9.31 16.17,11.68 15.08,13.55 12.27,13.42 10.87,14.23 9.58,16.73 7.42,16.73 6.13,14.23 4.73,13.42 1.92,13.55 0.83,11.68 2.35,9.31 2.35,7.69 0.83,5.32 1.92,3.45 4.73,3.58 6.13,2.77" fill="#AFB1B3"/><circle cx="8.5" cy="8.5" r="2.6" fill="#3C3F41"/></svg>
<div style="left:1870px;top:573px;width:15px;height:2.4px;background:#AFB1B3;"></div>
<div style="left:27px;top:591px;width:35px;height:433px;background:#3C3F41;"></div>
<div style="left:62px;top:591px;width:1px;height:433px;background:#2F3133;"></div>
<svg style="left:35px;top:600px;" width="20" height="19" viewBox="0 0 20 19"><path d="M1.5 7.5L7.5 1.5L11.5 1L12.5 2.5L9.5 5.5L19.5 15.5L16.5 18.5L6.5 8.5L4.5 10.5Z" fill="#499C54"/></svg>
<div style="left:39px;top:637px;width:12px;height:12px;background:#555759;"></div>
<div style="left:33px;top:663px;width:24px;height:1px;background:#515355;"></div>
<svg style="left:36px;top:675px;" width="18" height="18" viewBox="0 0 18 18"><path d="M2 16L9 9" stroke="#AFB1B3" stroke-width="3"/><path d="M9.5 4.5A4.5 4.5 0 0 1 16.5 1.5L13 5L14 7L16 8L17.5 5A4.5 4.5 0 0 1 11 10Z" fill="#AFB1B3"/></svg>
<div style="left:33px;top:704px;width:24px;height:1px;background:#515355;"></div>
<svg style="left:35px;top:716px;" width="19" height="19" viewBox="0 0 19 19"><path d="M1 18L7.5 11.5" stroke="#AFB1B3" stroke-width="2"/><path d="M11 1L18 8L16 9L11.5 13.5L12 16L3 7L5.5 7.5L10 3Z" fill="#AFB1B3"/></svg>
<svg style="left:35px;top:750px;" width="20" height="20" viewBox="0 0 20 20"><path d="M1 8C4 3 14 3 19 8C14 13 4 13 1 8Z" fill="#AFB1B3"/><circle cx="10" cy="8" r="3.6" fill="#3C3F41"/><circle cx="10" cy="8" r="1.8" fill="#AFB1B3"/><path d="M14 16H20L17 19Z" fill="#AFB1B3"/></svg>
<div style="left:63px;top:591px;width:498px;height:433px;background:#3C3F41;"></div>
<div style="left:64px;top:841px;width:497px;height:25px;background:#0D293E;"></div>
<svg style="left:72px;top:601px;" width="11" height="7" viewBox="0 0 11 7"><path d="M0.7 0.7L5.5 5.5L10.3 0.7" fill="none" stroke="#AFB1B3" stroke-width="1.3"/></svg>
<svg style="left:96px;top:596px;" width="16" height="16" viewBox="0 0 16 16"><circle cx="8" cy="8" r="8" fill="#BE5252"/><rect x="7.1" y="3.3" width="1.8" height="6.2" fill="#3C3F41"/><rect x="7.1" y="10.6" width="1.8" height="2.2" fill="#3C3F41"/></svg>
<div class="t" style="left:118px;top:597.30px;font-size:15px;color:#BBBBBB;font-family:'Liberation Sans', sans-serif;;font-weight:bold;transform:scaleX(0.9840);transform-origin:0 0">proj0:</div>
<div class="t" style="left:163px;top:597.30px;font-size:15px;color:#BBBBBB;font-family:'Liberation Sans', sans-serif;;transform:scaleX(1.0527);transform-origin:0 0">build failed</div>
<div class="t" style="left:243px;top:597.30px;font-size:15px;color:#8C8C8C;font-family:'Liberation Sans', sans-serif;;transform:scaleX(0.9659);transform-origin:0 0">At 6/23/2022 12:05 PM with 21 errors</div>
<div style="left:466px;top:591px;width:95px;height:28px;background:#3C3F41;"></div>
<div class="t" style="left:471px;top:598.00px;font-size:13px;color:#8C8C8C;font-family:'Liberation Sans', sans-serif;;transform:scaleX(0.9529);transform-origin:0 0">12 sec, 246 ms</div>
<svg style="left:95px;top:626px;" width="11" height="7" viewBox="0 0 11 7"><path d="M0.7 0.7L5.5 5.5L10.3 0.7" fill="none" stroke="#AFB1B3" stroke-width="1.3"/></svg>
<svg style="left:117px;top:620px;" width="20" height="20" viewBox="0 0 20 20"><path d="M8.5 0H15.2V9H2.8V5.7Z" fill="#9AA7B0"/><rect x="0" y="10" width="19" height="9" fill="#3D8EB0"/><path d="M5.6 11.5V16.2C5.6 17.6 3.2 17.6 3.2 16.4" fill="none" stroke="#1F3F52" stroke-width="1.2"/></svg>
<div class="t" style="left:140.5px;top:622.30px;font-size:15px;color:#BBBBBB;font-family:'Liberation Sans', sans-serif;;transform:scaleX(0.9375);transform-origin:0 0">Game.java</div>
<div class="t" style="left:214px;top:622.30px;font-size:15px;color:#8C8C8C;font-family:'Liberation Sans', sans-serif;;transform:scaleX(0.9779);transform-origin:0 0">game2048 11 errors</div>
<svg style="left:141px;top:646px;" width="16" height="16" viewBox="0 0 16 16"><circle cx="8" cy="8" r="8" fill="#BE5252"/><rect x="7.1" y="3.3" width="1.8" height="6.2" fill="#3C3F41"/><rect x="7.1" y="10.6" width="1.8" height="2.2" fill="#3C3F41"/></svg>
<div class="t" style="left:163px;top:647.30px;font-size:15px;color:#BBBBBB;font-family:'Liberation Sans', sans-serif;;transform:scaleX(1.0025);transform-origin:0 0">illegal start of expression</div>
<div class="t" style="left:332.0px;top:647.30px;font-size:15px;color:#8C8C8C;font-family:'Liberation Sans', sans-serif;;transform:scaleX(0.8872);transform-origin:0 0">:62</div>
<svg style="left:141px;top:671px;" width="16" height="16" viewBox="0 0 16 16"><circle cx="8" cy="8" r="8" fill="#BE5252"/><rect x="7.1" y="3.3" width="1.8" height="6.2" fill="#3C3F41"/><rect x="7.1" y="10.6" width="1.8" height="2.2" fill="#3C3F41"/></svg>
<div class="t" style="left:163px;top:672.30px;font-size:15px;color:#BBBBBB;font-family:'Liberation Sans', sans-serif;;transform:scaleX(0.9752);transform-origin:0 0">: expected</div>
<div class="t" style="left:234.0px;top:672.30px;font-size:15px;color:#8C8C8C;font-family:'Liberation Sans', sans-serif;;transform:scaleX(0.8872);transform-origin:0 0">:63</div>
<svg style="left:141px;top:696px;" width="16" height="16" viewBox="0 0 16 16"><circle cx="8" cy="8" r="8" fill="#BE5252"/><rect x="7.1" y="3.3" width="1.8" height="6.2" fill="#3C3F41"/><rect x="7.1" y="10.6" width="1.8" height="2.2" fill="#3C3F41"/></svg>
<div class="t" style="left:163px;top:697.30px;font-size:15px;color:#BBBBBB;font-family:'Liberation Sans', sans-serif;;transform:scaleX(1.0058);transform-origin:0 0">not a statement</div>
<div class="t" style="left:270.5px;top:697.30px;font-size:15px;color:#8C8C8C;font-family:'Liberation Sans', sans-serif;;transform:scaleX(0.8872);transform-origin:0 0">:63</div>
<svg style="left:141px;top:721px;" width="16" height="16" viewBox="0 0 16 16"><circle cx="8" cy="8" r="8" fill="#BE5252"/><rect x="7.1" y="3.3" width="1.8" height="6.2" fill="#3C3F41"/><rect x="7.1" y="10.6" width="1.8" height="2.2" fill="#3C3F41"/></svg>
<div class="t" style="left:163px;top:722.30px;font-size:15px;color:#BBBBBB;font-family:'Liberation Sans', sans-serif;;transform:scaleX(0.9752);transform-origin:0 0">: expected</div>
<div class="t" style="left:234.0px;top:722.30px;font-size:15px;color:#8C8C8C;font-family:'Liberation Sans', sans-serif;;transform:scaleX(0.8872);transform-origin:0 0">:64</div>
<svg style="left:141px;top:746px;" width="16" height="16" viewBox="0 0 16 16"><circle cx="8" cy="8" r="8" fill="#BE5252"/><rect x="7.1" y="3.3" width="1.8" height="6.2" fill="#3C3F41"/><rect x="7.1" y="10.6" width="1.8" height="2.2" fill="#3C3F41"/></svg>
<div class="t" style="left:163px;top:747.30px;font-size:15px;color:#BBBBBB;font-family:'Liberation Sans', sans-serif;;transform:scaleX(1.0058);transform-origin:0 0">not a statement</div>
<div class="t" style="left:270.5px;top:747.30px;font-size:15px;color:#8C8C8C;font-family:'Liberation Sans', sans-serif;;transform:scaleX(0.8872);transform-origin:0 0">:64</div>
<svg style="left:141px;top:771px;" width="16" height="16" viewBox="0 0 16 16"><circle cx="8" cy="8" r="8" fill="#BE5252"/><rect x="7.1" y="3.3" width="1.8" height="6.2" fill="#3C3F41"/><rect x="7.1" y="10.6" width="1.8" height="2.2" fill="#3C3F41"/></svg>
<div class="t" style="left:163px;top:772.30px;font-size:15px;color:#BBBBBB;font-family:'Liberation Sans', sans-serif;;transform:scaleX(0.9752);transform-origin:0 0">: expected</div>
<div class="t" style="left:234.0px;top:772.30px;font-size:15px;color:#8C8C8C;font-family:'Liberation Sans', sans-serif;;transform:scaleX(0.8872);transform-origin:0 0">:65</div>
<svg style="left:141px;top:796px;" width="16" height="16" viewBox="0 0 16 16"><circle cx="8" cy="8" r="8" fill="#BE5252"/><rect x="7.1" y="3.3" width="1.8" height="6.2" fill="#3C3F41"/><rect x="7.1" y="10.6" width="1.8" height="2.2" fill="#3C3F41"/></svg>
<div class="t" style="left:163px;top:797.30px;font-size:15px;color:#BBBBBB;font-family:'Liberation Sans', sans-serif;;transform:scaleX(1.0058);transform-origin:0 0">not a statement</div>
<div class="t" style="left:270.5px;top:797.30px;font-size:15px;color:#8C8C8C;font-family:'Liberation Sans', sans-serif;;transform:scaleX(0.8872);transform-origin:0 0">:65</div>
<svg style="left:141px;top:821px;" width="16" height="16" viewBox="0 0 16 16"><circle cx="8" cy="8" r="8" fill="#BE5252"/><rect x="7.1" y="3.3" width="1.8" height="6.2" fill="#3C3F41"/><rect x="7.1" y="10.6" width="1.8" height="2.2" fill="#3C3F41"/></svg>
<div class="t" style="left:163px;top:822.30px;font-size:15px;color:#BBBBBB;font-family:'Liberation Sans', sans-serif;;transform:scaleX(0.9752);transform-origin:0 0">: expected</div>
<div class="t" style="left:234.0px;top:822.30px;font-size:15px;color:#8C8C8C;font-family:'Liberation Sans', sans-serif;;transform:scaleX(0.8872);transform-origin:0 0">:66</div>
<svg style="left:141px;top:846px;" width="16" height="16" viewBox="0 0 16 16"><circle cx="8" cy="8" r="8" fill="#BE5252"/><rect x="7.1" y="3.3" width="1.8" height="6.2" fill="#3C3F41"/><rect x="7.1" y="10.6" width="1.8" height="2.2" fill="#3C3F41"/></svg>
<div class="t" style="left:163px;top:847.30px;font-size:15px;color:#BBBBBB;font-family:'Liberation Sans', sans-serif;;transform:scaleX(1.0058);transform-origin:0 0">not a statement</div>
<div class="t" style="left:270.5px;top:847.30px;font-size:15px;color:#8C8C8C;font-family:'Liberation Sans', sans-serif;;transform:scaleX(0.8872);transform-origin:0 0">:66</div>
<svg style="left:141px;top:871px;" width="16" height="16" viewBox="0 0 16 16"><circle cx="8" cy="8" r="8" fill="#BE5252"/><rect x="7.1" y="3.3" width="1.8" height="6.2" fill="#3C3F41"/><rect x="7.1" y="10.6" width="1.8" height="2.2" fill="#3C3F41"/></svg>
<div class="t" style="left:163px;top:872.30px;font-size:15px;color:#BBBBBB;font-family:'Liberation Sans', sans-serif;;transform:scaleX(0.9752);transform-origin:0 0">: expected</div>
<div class="t" style="left:234.0px;top:872.30px;font-size:15px;color:#8C8C8C;font-family:'Liberation Sans', sans-serif;;transform:scaleX(0.8872);transform-origin:0 0">:67</div>
<svg style="left:141px;top:896px;" width="16" height="16" viewBox="0 0 16 16"><circle cx="8" cy="8" r="8" fill="#BE5252"/><rect x="7.1" y="3.3" width="1.8" height="6.2" fill="#3C3F41"/><rect x="7.1" y="10.6" width="1.8" height="2.2" fill="#3C3F41"/></svg>
<div class="t" style="left:163px;top:897.30px;font-size:15px;color:#BBBBBB;font-family:'Liberation Sans', sans-serif;;transform:scaleX(1.0025);transform-origin:0 0">illegal start of expression</div>
<div class="t" style="left:332.0px;top:897.30px;font-size:15px;color:#8C8C8C;font-family:'Liberation Sans', sans-serif;;transform:scaleX(0.8872);transform-origin:0 0">:67</div>
<svg style="left:97px;top:924px;" width="7" height="11" viewBox="0 0 7 11"><path d="M0.7 0.7L5.5 5.5L0.7 10.3" fill="none" stroke="#AFB1B3" stroke-width="1.3"/></svg>
<svg style="left:117px;top:920px;" width="20" height="20" viewBox="0 0 20 20"><path d="M8.5 0H15.2V9H2.8V5.7Z" fill="#9AA7B0"/><rect x="0" y="10" width="19" height="9" fill="#3D8EB0"/><path d="M5.6 11.5V16.2C5.6 17.6 3.2 17.6 3.2 16.4" fill="none" stroke="#1F3F52" stroke-width="1.2"/></svg>
<div class="t" style="left:140.5px;top:922.30px;font-size:15px;color:#BBBBBB;font-family:'Liberation Sans', sans-serif;;transform:scaleX(0.9303);transform-origin:0 0">GUISource.java</div>
<div class="t" style="left:244px;top:922.30px;font-size:15px;color:#8C8C8C;font-family:'Liberation Sans', sans-serif;;transform:scaleX(0.9698);transform-origin:0 0">game2048 10 errors</div>
<div style="left:561px;top:591px;width:1px;height:433px;background:#2F3133;"></div>
<div style="left:562px;top:591px;width:1297px;height:433px;background:#2B2B2B;"></div>
<div class="t" style="left:576px;top:599.22px;font-family:'Liberation Mono', monospace;font-size:16.67px;color:#287BDE"><span style="text-decoration:underline;text-underline-offset:3px">C:\Users\aahil\Documents\Coding\cs61bl\su22-s343\proj0\game2048\Game.java</span><span style="color:#FF6B68">:66:43</span></div>
<div class="t" style="left:576px;top:627.22px;font-family:'Liberation Mono', monospace;font-size:16.67px;color:#FF6B68">java: not a statement</div>
<div style="left:1859px;top:591px;width:35px;height:433px;background:#3C3F41;"></div>
<svg style="left:1868px;top:601px;" width="18" height="19" viewBox="0 0 18 19"><path d="M0 1H16M0 7H12A4 4 0 0 1 12 15H7" fill="none" stroke="#AFB1B3" stroke-width="2"/><path d="M0 13H3" stroke="#AFB1B3" stroke-width="2"/><path d="M9.5 11.5V18.5L5.5 15Z" fill="#AFB1B3"/></svg>
<div style="left:1862px;top:628px;width:28px;height:28px;background:#5C6164;border-radius:4px"></div>
<svg style="left:1868px;top:633px;" width="18" height="18" viewBox="0 0 18 18"><path d="M0 4H4M0 9H4M0 14H16" stroke="#AFB1B3" stroke-width="2"/><path d="M11 0V9" stroke="#AFB1B3" stroke-width="2"/><path d="M6.5 7.5H15.5L11 12Z" fill="#AFB1B3"/></svg>
<div style="left:0px;top:1024px;width:1920px;height:29px;background:#3C3F41;"></div>
<div style="left:0px;top:1024px;width:1895px;height:1px;background:#2F3133;"></div>
<div style="left:807px;top:1025px;width:72px;height:28px;background:#2D2F31;"></div>
<div style="left:0px;top:1053px;width:1920px;height:1px;background:#4B4D4F;"></div>
<svg style="left:40px;top:1032px;" width="13" height="15" viewBox="0 0 13 15"><circle cx="2.5" cy="2.5" r="1.8" fill="#AFB1B3"/><circle cx="2.5" cy="12.5" r="1.8" fill="#AFB1B3"/><circle cx="10.5" cy="2.5" r="1.8" fill="#AFB1B3"/><path d="M2.5 3V12.5M10.5 3V5C10.5 8 2.5 8 2.5 12" fill="none" stroke="#AFB1B3" stroke-width="1.8"/></svg>
<div class="t" style="left:60px;top:1032.30px;font-size:15px;color:#BBBBBB;font-family:'Liberation Sans', sans-serif;;transform:scaleX(0.8347);transform-origin:0 0">Git</div>
<svg style="left:102px;top:1033px;" width="11" height="13" viewBox="0 0 11 13"><path d="M0.5 0.5V12.5L10.5 6.5Z" fill="#AFB1B3"/></svg>
<div class="t" style="left:121px;top:1032.30px;font-size:15px;color:#BBBBBB;font-family:'Liberation Sans', sans-serif;;transform:scaleX(0.7995);transform-origin:0 0">Run</div>
<svg style="left:170px;top:1031px;" width="16" height="16" viewBox="0 0 16 16"><path d="M8 0.5L15.5 4L8 7.5L0.5 4Z" fill="#AFB1B3"/><path d="M0.5 7.5L8 11L15.5 7.5M0.5 11L8 14.5L15.5 11" fill="none" stroke="#AFB1B3" stroke-width="1.5"/></svg>
<div class="t" style="left:191px;top:1032.30px;font-size:15px;color:#BBBBBB;font-family:'Liberation Sans', sans-serif;;transform:scaleX(0.8309);transform-origin:0 0">Python Packages</div>
<svg style="left:317px;top:1033px;" width="14" height="12" viewBox="0 0 14 12"><path d="M0 1H2.5M4 1H14M0 5H2.5M4 5H14M0 9H2.5M4 9H14" stroke="#AFB1B3" stroke-width="2"/></svg>
<div class="t" style="left:336px;top:1032.30px;font-size:15px;color:#BBBBBB;font-family:'Liberation Sans', sans-serif;;transform:scaleX(0.8128);transform-origin:0 0">TODO</div>
<svg style="left:397.5px;top:1030px;" width="16" height="16" viewBox="0 0 16 16"><circle cx="8" cy="8" r="8" fill="#BE5252"/><rect x="7.1" y="3.3" width="1.8" height="6.2" fill="#3C3F41"/><rect x="7.1" y="10.6" width="1.8" height="2.2" fill="#3C3F41"/></svg>
<div class="t" style="left:419px;top:1032.30px;font-size:15px;color:#BBBBBB;font-family:'Liberation Sans', sans-serif;;transform:scaleX(0.8602);transform-origin:0 0">Problems</div>
<svg style="left:501px;top:1032px;" width="15" height="13" viewBox="0 0 15 13"><rect x="0" y="0" width="15" height="13" fill="#AFB1B3"/><path d="M3 3L6 6L3 9" fill="none" stroke="#3C3F41" stroke-width="1.5"/><path d="M7 10H12" stroke="#3C3F41" stroke-width="1.5"/></svg>
<div class="t" style="left:521px;top:1032.30px;font-size:15px;color:#BBBBBB;font-family:'Liberation Sans', sans-serif;;transform:scaleX(0.8821);transform-origin:0 0">Terminal</div>
<svg style="left:600px;top:1031px;" width="16" height="16" viewBox="0 0 16 16"><rect x="0.75" y="0.75" width="14.5" height="14.5" fill="none" stroke="#6E7072" stroke-width="1.5"/><rect x="3" y="3" width="10" height="10" fill="#5C5E60"/><path d="M6 5V11M10 5V11" stroke="#AFB1B3" stroke-width="1.3"/></svg>
<div class="t" style="left:623px;top:1032.30px;font-size:15px;color:#BBBBBB;font-family:'Liberation Sans', sans-serif;;transform:scaleX(0.8247);transform-origin:0 0">Style Checker</div>
<svg style="left:726px;top:1031px;" width="17" height="17" viewBox="0 0 17 17"><path d="M4.5 1H12.5L16.5 8.5L12.5 16H4.5L0.5 8.5Z" fill="#AFB1B3"/><path d="M6.5 5V12L12 8.5Z" fill="#3C3F41"/></svg>
<div class="t" style="left:749px;top:1032.30px;font-size:15px;color:#BBBBBB;font-family:'Liberation Sans', sans-serif;;transform:scaleX(0.8171);transform-origin:0 0">Services</div>
<svg style="left:819px;top:1031px;" width="17" height="17" viewBox="0 0 17 17"><path d="M1.5 6.5L6.5 1.5L9.5 1L10.5 2.5L8 5L16 13L13.5 15.5L5.5 7.5L4 9Z" fill="#AFB1B3"/></svg>
<div class="t" style="left:841px;top:1032.30px;font-size:15px;color:#FFFFFF;font-family:'Liberation Sans', sans-serif;;transform:scaleX(0.8395);transform-origin:0 0">Build</div>
<div style="left:0px;top:1054px;width:1920px;height:24px;background:#3C3F41;"></div>
<div style="left:0px;top:1078px;width:1920px;height:2px;background:#2B2B2B;"></div>
<svg style="left:8px;top:1058px;" width="16" height="16" viewBox="0 0 16 16"><rect x="4.5" y="0.75" width="10.75" height="10.75" fill="none" stroke="#AFB1B3" stroke-width="1.5"/><path d="M0.75 4V15.25H12" fill="none" stroke="#AFB1B3" stroke-width="1.5"/></svg>
<div class="t" style="left:34.5px;top:1058.30px;font-size:15px;color:#BBBBBB;font-family:'Liberation Sans', sans-serif;;transform:scaleX(0.9880);transform-origin:0 0">Build completed with 21 errors and 0 warnings in 12 sec, 246 ms (moments ago)</div>
<div class="t" style="left:1601px;top:1057.88px;font-size:15.5px;color:#BBBBBB;font-family:'Liberation Sans', sans-serif;;transform:scaleX(0.9023);transform-origin:0 0">63:36</div>
<div class="t" style="left:1651px;top:1057.88px;font-size:15.5px;color:#BBBBBB;font-family:'Liberation Sans', sans-serif;;transform:scaleX(0.7906);transform-origin:0 0">CRLF</div>
<div class="t" style="left:1700px;top:1057.88px;font-size:15.5px;color:#BBBBBB;font-family:'Liberation Sans', sans-serif;;transform:scaleX(0.8654);transform-origin:0 0">UTF-8</div>
<div class="t" style="left:1753px;top:1057.88px;font-size:15.5px;color:#BBBBBB;font-family:'Liberation Sans', sans-serif;;transform:scaleX(0.9027);transform-origin:0 0">4 spaces</div>
<svg style="left:1826px;top:1057px;" width="18" height="18" viewBox="0 0 18 18"><circle cx="2.5" cy="2.5" r="1.8" fill="#AFB1B3"/><circle cx="2.5" cy="14" r="1.8" fill="#AFB1B3"/><circle cx="10" cy="2.5" r="1.8" fill="#AFB1B3"/><path d="M2.5 3V14M10 3V5.5C10 9 2.5 9 2.5 13" fill="none" stroke="#AFB1B3" stroke-width="1.6"/><circle cx="11.5" cy="14" r="3.8" fill="#499C54"/></svg>
<div class="t" style="left:1846px;top:1057.88px;font-size:15.5px;color:#BBBBBB;font-family:'Liberation Sans', sans-serif;;transform:scaleX(0.9525);transform-origin:0 0">main</div>
<svg style="left:1890px;top:1057px;" width="15" height="15" viewBox="0 0 15 15"><path d="M2 6V3.5A3 3 0 0 1 8 3.5" fill="none" stroke="#AFB1B3" stroke-width="1.8"/><rect x="5" y="7" width="10" height="8" fill="#AFB1B3"/></svg></body></html>
